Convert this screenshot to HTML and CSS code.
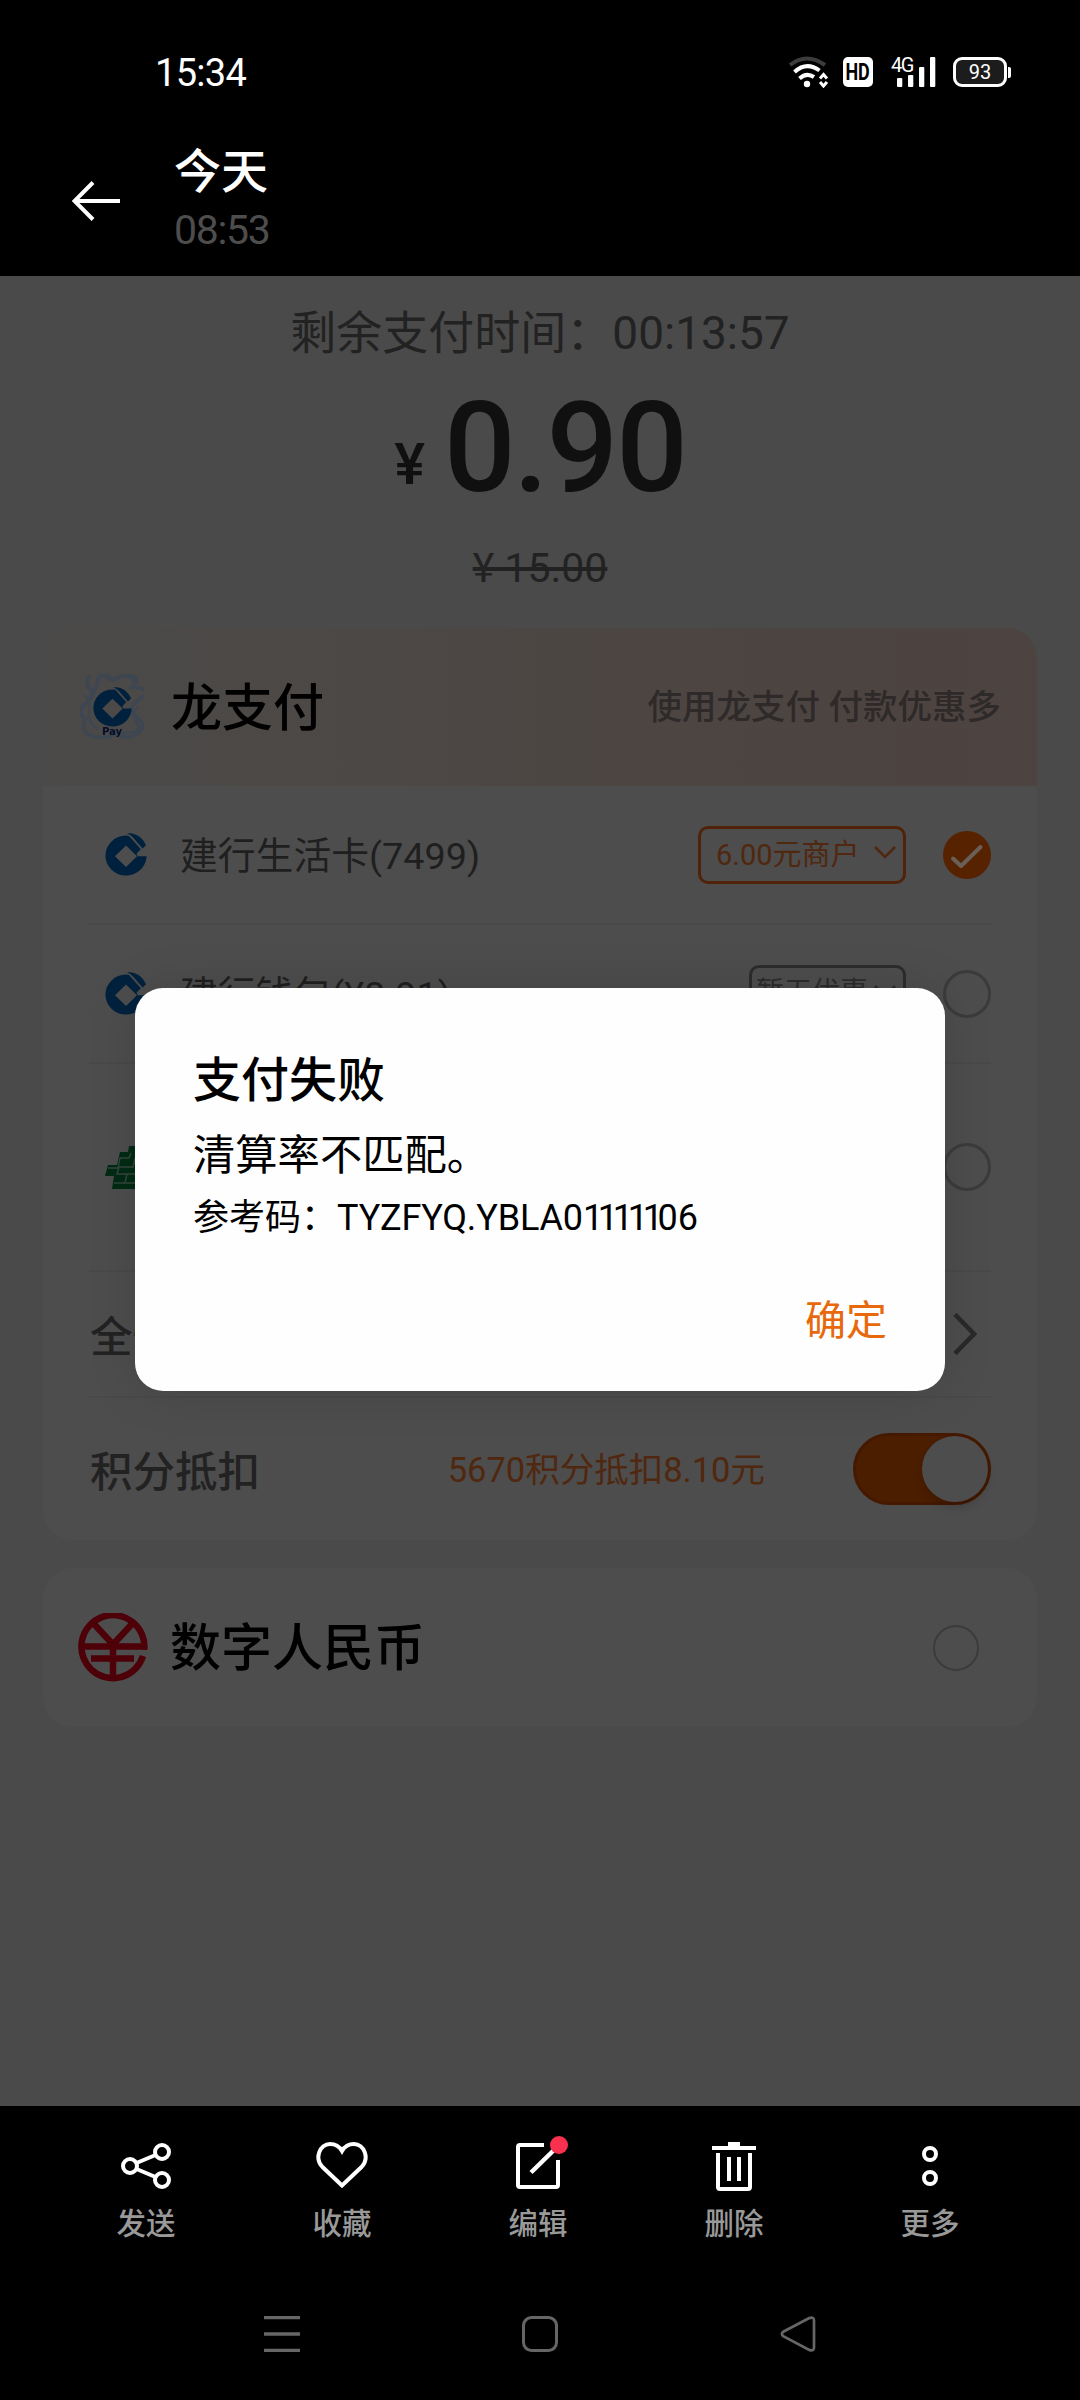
FILE: index.html
```html
<!DOCTYPE html>
<html lang="zh-CN">
<head>
<meta charset="utf-8">
<title>支付失败</title>
<link rel="stylesheet" href="styles.css">
</head>
<body>
<svg class="defs" width="0" height="0">
  <symbol id="ccb" viewBox="0 0 42 43">
    <path fill-rule="evenodd" d="M41.6 23.2A20.6 20 0 1 1 21 2.6L24 3L35.8 16.2L31.6 20.6L32.6 23.2ZM21 12.5L10 23.2L21 34L32 23.2Z"/>
    <path d="M22 .5C30-.8 37.500 4.500 41 12.200L37.600 15.600L28 4.600Q25.500 1.600 22 .5Z"/>
  </symbol>
</svg>
<div class="screen">
  <div class="statusbar">
    <span class="clock">15:34</span>
    <div class="sysicons">
      <svg class="wifi" width="41" height="32" viewBox="0 0 41 32" fill="none" stroke="#fff" stroke-width="4">
        <path d="M2 9Q18.500-4 37 9" stroke="#3c3c3c"/>
        <path d="M6.500 16Q18.500 5 31.500 14.500"/>
        <path d="M11.500 22.500Q18.500 16 26 21"/>
        <circle cx="19" cy="28" r="3.200" fill="#fff" stroke="none"/>
        <path d="M32 22.500L35.500 18.500L39 22.500M32 26L35.500 30L39 26" stroke-width="3"/>
      </svg>
      <span class="hd"><span>HD</span></span>
      <div class="signal">
        <span class="net">4G</span>
        <svg width="39" height="30" viewBox="0 0 39 30" fill="#fff">
          <rect x="0" y="21" width="5.300" height="9" rx="1"/><rect x="11" y="18" width="5.300" height="12" rx="1"/><rect x="22" y="10" width="5.300" height="20" rx="1"/><rect x="33" y="0" width="5.300" height="30" rx="1"/>
        </svg>
      </div>
      <span class="battery">93</span>
    </div>
  </div>
  <div class="appbar">
    <svg width="48" height="40" viewBox="0 0 48 40" fill="none" stroke="#fff" stroke-width="4"><path d="M48 20H3M21 1.500L2.500 20L21 38.500"/></svg>
    <div class="when"><div class="day">今天</div><div class="hour">08:53</div></div>
  </div>

  <div class="page">
    <div class="timer">剩余支付时间：00:13:57</div>
    <div class="price"><span class="yen">¥</span><span class="sum">0.90</span></div>
    <div class="old">¥ 15.00</div>

    <div class="card">
      <div class="cardhead">
        <div class="paylogo">
          <svg class="swirl" width="64" height="68" viewBox="0 0 64 68" fill="none" stroke="#3e4751" stroke-width="4">
            <path d="M10 2Q4 10 10 16T6 30T5 46Q0 62 16 64T34 60Q48 68 58 60T56 44T60 26T52 14Q62 4 50 3T34 7Q20-2 18 7T12 22"/>
            <path d="M4 22Q12 28 9 38T18 56M58 34Q50 40 57 50T42 60M24 3Q30 10 40 5T56 12" stroke-width="2.500"/>
          </svg>
          <svg class="mark" width="39" height="40"><use href="#ccb"/></svg>
          <span class="pay">Pay</span>
        </div>
        <span class="cardtitle">龙支付</span>
        <span class="slogan">使用龙支付 付款优惠多</span>
      </div>
      <div class="row r1">
        <svg class="bank" width="42" height="43"><use href="#ccb"/></svg>
        <span class="acct">建行生活卡(7499)</span>
        <span class="badge hot"><span>6.00元商户</span><svg width="22" height="13" viewBox="0 0 22 13" fill="none" stroke="#50270f" stroke-width="2.500"><path d="M1 1L11 11L21 1"/></svg></span>
        <svg width="48" height="48" viewBox="0 0 48 48"><circle cx="24" cy="24" r="24" fill="#562200"/><path d="M10 27.500L18 35L37.500 16" fill="none" stroke="#6a5f57" stroke-width="4" stroke-linecap="round" stroke-linejoin="round"/></svg>
      </div>
      <div class="row r2">
        <svg class="bank" width="42" height="43"><use href="#ccb"/></svg>
        <span class="acct">建行钱包(¥8.91)</span>
        <span class="badge none"><span>暂无优惠</span><svg width="22" height="13" viewBox="0 0 22 13" fill="none" stroke="#2c2c2c" stroke-width="2.500"><path d="M1 1L11 11L21 1"/></svg></span>
        <span class="radio"></span>
      </div>
      <div class="row r3">
        <svg width="42" height="43" viewBox="0 0 42 43"><path d="M24 0H42V43H7L9 30H0L3 19H12L15 6H23Z" fill="#002a14"/><path d="M26 7L24 12H15L13 22H3M20 37L22 28H12L14 21H28L30 12M9 37H42M22 28H42" fill="none" stroke="#33463a" stroke-width="1.500"/></svg>
        <span class="grow"></span>
        <span class="radio"></span>
      </div>
      <div class="row r4">
        <span class="label">全部</span>
        <svg class="more" width="24" height="42" viewBox="0 0 24 42" fill="none" stroke="#292929" stroke-width="4.500"><path d="M2 1.500L21 21L2 40.500"/></svg>
      </div>
      <div class="row r5">
        <span class="label">积分抵扣</span>
        <span class="points">5670积分抵扣8.10元</span>
        <span class="toggle"><span class="knob"></span></span>
      </div>
    </div>

    <div class="card ecny">
      <svg width="70" height="70" viewBox="0 0 70 70" fill="none" stroke="#4e0008" stroke-width="6.500">
        <path d="M66.300 36.500A31.500 31.500 0 1 0 65 43"/>
        <path d="M16 11L35 31.500L54 11M5 33.500H69M13 45.500H56M35 30V66"/>
      </svg>
      <span class="cardtitle">数字人民币</span>
      <span class="radio thin"></span>
    </div>
  </div>

  <div class="toolbar">
    <div class="tool"><svg width="52" height="52" viewBox="0 0 52 52" fill="none" stroke="#fff" stroke-width="4"><circle cx="10" cy="26" r="7"/><circle cx="42" cy="12" r="7"/><circle cx="42" cy="40" r="7"/><path d="M16.500 23L35.500 15M16.500 29L35.500 37"/></svg><span>发送</span></div>
    <div class="tool"><svg width="52" height="52" viewBox="0 0 52 52" fill="none" stroke="#fff" stroke-width="4"><path d="M26 45.500L6.500 27C-2 18 4 4 14 4C20 4 24 7.500 26 11C28 7.500 32 4 38 4C48 4 54 18 45.500 27Z"/></svg><span>收藏</span></div>
    <div class="tool"><svg width="52" height="52" viewBox="0 0 52 52" fill="none" stroke="#fff" stroke-width="4"><path d="M32 5H8Q6 5 6 7V45Q6 47 8 47H44Q46 47 46 45V20"/><path d="M19 32.500L42 10" stroke-width="4.500"/></svg><i class="dot"></i><span>编辑</span></div>
    <div class="tool"><svg width="52" height="52" viewBox="0 0 52 52" fill="none" stroke="#fff" stroke-width="4"><path d="M4 8H48M20 4H32M10 13V47Q10 49 12 49H40Q42 49 42 47V13M21 17V41M31 17V41"/><path d="M20 5H32"/></svg><span>删除</span></div>
    <div class="tool"><svg width="52" height="52" viewBox="0 0 52 52" fill="none" stroke="#fff" stroke-width="4"><circle cx="26" cy="14" r="6"/><circle cx="26" cy="38" r="6"/></svg><span>更多</span></div>
  </div>
  <div class="navbar">
    <svg width="36" height="36" viewBox="0 0 36 36" stroke="#666" stroke-width="3.300"><path d="M0 1.700H36M0 18H36M0 34.300H36"/></svg>
    <svg width="36" height="36" viewBox="0 0 36 36" fill="none" stroke="#666" stroke-width="3"><rect x="1.500" y="1.500" width="33" height="33" rx="8"/></svg>
    <svg width="36" height="36" viewBox="0 0 36 36" fill="none" stroke="#666" stroke-width="2.700"><path d="M3.200 15.800L29.300 2.100Q34 .5 34 4.500V31.500Q34 35.500 29.300 33.900L3.200 20.200Q.6 18 3.200 15.800Z"/></svg>
  </div>

  <div class="dialog">
    <div class="dtitle">支付失败</div>
    <div class="dmsg">清算率不匹配。</div>
    <div class="dref">参考码：<span class="code">TYZFYQ.YBLA0<span class="ones">11111</span>06</span></div>
    <div class="ok">确定</div>
  </div>
</div>
</body>
</html>
```
FILE: styles.css
```css
* { box-sizing: border-box; }
body { margin: 0; background: #000; font-family: Roboto, "Noto Sans CJK SC", sans-serif; }
.defs { display: block; position: absolute; }
svg { display: block; flex: none; }
.screen { position: relative; width: 1080px; height: 2400px; overflow: hidden; background: #000; display: flex; flex-direction: column; white-space: nowrap; }

.statusbar { height: 110px; padding: 34px 69px 0 155px; display: flex; align-items: center; justify-content: space-between; color: #fff; }
.clock { font-size: 38px; letter-spacing: -.7px; padding-top: 1px; }
.sysicons { display: flex; align-items: center; }
.wifi { margin-right: 14px; }
.hd { width: 30px; height: 30px; margin-right: 18px; border-radius: 5px; background: #fff; color: #000; font-size: 23px; font-weight: 700; line-height: 31px; display: flex; justify-content: center; }
.hd span { transform: scaleX(.78); }
.signal { position: relative; width: 45px; height: 30px; padding-left: 6px; margin-right: 17px; }
.net { position: absolute; left: 0; top: -1px; font-size: 20px; line-height: 19px; letter-spacing: -1.500px; }
.battery { position: relative; width: 54px; height: 30px; border: 3px solid #fff; border-radius: 9px; background: #1c1c1c; font-size: 20px; line-height: 25px; text-align: center; margin-right: 4px; }
.battery::after { content: ""; position: absolute; right: -7px; top: 7px; width: 3px; height: 11px; border-radius: 0 2px 2px 0; background: #fff; }

.appbar { height: 166px; padding: 30px 0 0 72px; display: flex; align-items: flex-start; }
.appbar svg { margin-top: 41px; }
.when { margin-left: 54px; }
.day { height: 60px; line-height: 64px; font-size: 47px; font-weight: 500; color: #fff; }
.hour { height: 60px; line-height: 60px; font-size: 41px; color: #4d4d4d; letter-spacing: -1.300px; }

.page { height: 1830px; background: #4a4a4a; padding-top: 26px; display: flex; flex-direction: column; }
.timer { height: 60px; line-height: 62px; font-size: 46px; color: #222; text-align: center; }
.price { height: 120px; margin-top: 24px; text-align: center; color: #101010; line-height: 120px; font-weight: 500; }
.yen { font-size: 58px; line-height: 60px; margin-right: 19px; vertical-align: 7px; }
.sum { font-size: 126px; letter-spacing: -2px; line-height: 124px; }
.old { height: 50px; line-height: 52px; margin-top: 36px; text-align: center; font-size: 41px; color: #222; text-decoration: line-through; text-decoration-thickness: 4px; }
.card { width: 994px; margin: 36px 0 0 43px; border-radius: 30px; background: #4d4d4d; overflow: hidden; }
.cardhead { height: 158px; padding: 0 36px 0 37px; display: flex; align-items: center; background: linear-gradient(90deg, #4b4a49 0%, #4c4845 35%, #4c4542 65%, #4d4340 100%); }
.cardtitle { margin-left: 27px; padding-bottom: 7px; font-size: 51px; font-weight: 500; color: #000; }
.slogan { margin-left: auto; padding-bottom: 6px; font-size: 34.500px; font-weight: 500; color: #2e2a29; }
.paylogo { position: relative; width: 64px; height: 68px; }
.swirl { position: absolute; left: 0; top: 0; }
.mark { position: absolute; left: 13px; top: 14px; fill: #00213d; }
.pay { position: absolute; left: 0; width: 64px; top: 51px; font-size: 10px; line-height: 16px; font-weight: 700; text-align: center; color: #050d28; font-family: "DejaVu Sans", sans-serif; }
.row { margin: 0 46px; display: flex; align-items: center; border-bottom: 2px solid #494949; }
.r1 { height: 139px; padding-left: 16px; }
.r2 { height: 139px; padding-left: 16px; }
.r3 { height: 208px; padding-left: 16px; }
.r4 { height: 126px; }
.r5 { height: 142px; border-bottom: 0; }
.bank { fill: #00213d; }
.acct { margin-left: 33px; padding-bottom: 5px; flex: 1; font-size: 37.800px; color: #1f1f1f; }
.grow { flex: 1; }
.badge { height: 58px; border: 3px solid; border-radius: 10px; margin-right: 37px; padding: 0 7px 4px 15px; display: flex; align-items: center; justify-content: space-between; font-size: 29px; }
.badge span { padding-bottom: 2px; }
.hot { width: 208px; color: #50270f; border-color: #50220a; }
.none { width: 157px; color: #2c2c2c; border-color: #2c2c2c; padding-left: 4px; font-size: 28px; }
.none span { padding-bottom: 4px; }
.radio { width: 48px; height: 48px; border: 3px solid #3b3b3b; border-radius: 50%; }
.label { padding: 0 0 2px 1px; font-size: 42.500px; color: #222; font-weight: 500; }
.more { margin-left: auto; margin-right: 14px; }
.points { margin-left: auto; margin-right: 88px; padding-bottom: 5px; font-size: 34.500px; color: #50270f; }
.toggle { width: 138px; height: 72px; border: 3px solid #451900; border-radius: 36px; background: #4c1e00; display: flex; justify-content: flex-end; }
.knob { width: 66px; height: 66px; border-radius: 50%; background: #4d4d4d; box-shadow: 0 6px 8px rgba(0,0,0,.15); }
.ecny { height: 159px; margin-top: 28px; padding: 0 58px 0 35px; display: flex; align-items: center; }
.ecny .cardtitle { margin-left: 22px; }
.thin { width: 46px; height: 46px; border-width: 2px; margin-left: auto; }

.toolbar { height: 154px; padding: 34px 52px 0 48px; display: flex; }
.tool { position: relative; width: 196px; display: flex; flex-direction: column; align-items: center; font-size: 29.500px; line-height: 40px; font-weight: 500; color: #999; }
.tool span { margin-top: 12px; }
.dot { position: absolute; left: 110px; top: -4px; width: 18px; height: 18px; border-radius: 50%; background: #f9314f; }
.navbar { height: 140px; padding: 56px 264px 48px; display: flex; justify-content: space-between; }

.dialog { position: absolute; left: 135px; top: 988px; width: 810px; height: 403px; border-radius: 28px; background: #fefefe; padding: 60px 58px 0; color: #000; box-shadow: 0 0 50px rgba(0,0,0,.12); }
.dtitle { height: 66px; line-height: 66px; font-size: 48px; font-weight: 500; }
.dmsg { height: 60px; line-height: 60px; margin-top: 12px; font-size: 42.300px; }
.dref { height: 50px; line-height: 50px; margin-top: 7px; font-size: 36px; }
.code { letter-spacing: -.15px; }
.ones { letter-spacing: -5.300px; }
.ok { height: 60px; line-height: 60px; margin-top: 48px; text-align: right; font-size: 41px; color: #e8690b; }
```
